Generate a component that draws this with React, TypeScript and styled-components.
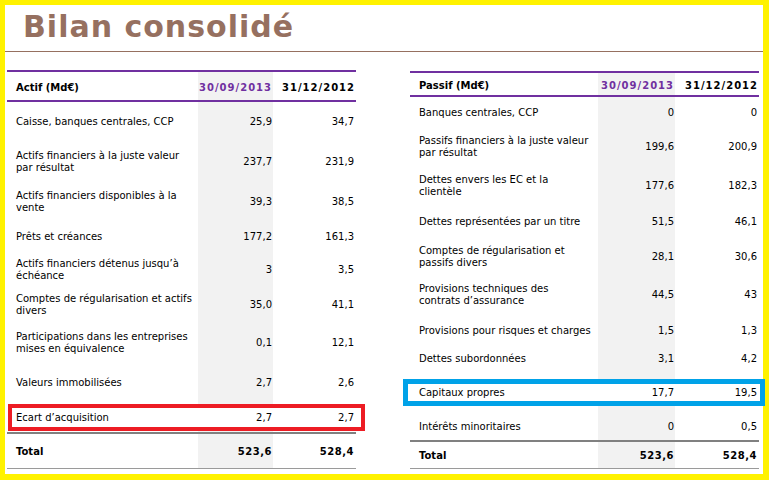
import styled, { createGlobalStyle } from "styled-components";

type Mark = { color: string; width: number; top: number; right: number; bottom: number; left: number };
type Line = { label: string; a: string; b: string; h: number; mark?: Mark };
type Sheet = {
  title: string;
  cols: [number, number, number];
  top: number;
  head: number;
  total: [string, string, number];
  rows: Line[];
};

const GlobalStyle = createGlobalStyle`
  body {
    margin: 0;
    background: #fff;
  }
`;

const actif: Sheet = {
  title: "Actif (Md€)",
  cols: [191, 75, 83],
  top: 0,
  head: 32,
  total: ["523,6", "528,4", 37],
  rows: [
    { label: "Caisse, banques centrales, CCP", a: "25,9", b: "34,7", h: 38 },
    { label: "Actifs financiers à la juste valeur\npar résultat", a: "237,7", b: "231,9", h: 42 },
    { label: "Actifs financiers disponibles à la\nvente", a: "39,3", b: "38,5", h: 37 },
    { label: "Prêts et créances", a: "177,2", b: "161,3", h: 33 },
    { label: "Actifs financiers détenus jusqu’à\néchéance", a: "3", b: "3,5", h: 33 },
    { label: "Comptes de régularisation et actifs\ndivers", a: "35,0", b: "41,1", h: 37 },
    { label: "Participations dans les entreprises\nmises en équivalence", a: "0,1", b: "12,1", h: 40 },
    { label: "Valeurs immobilisées", a: "2,7", b: "2,6", h: 39 },
    {
      label: "Ecart d’acquisition",
      a: "2,7",
      b: "2,7",
      h: 31,
      mark: { color: "#ed1c24", width: 4, top: 3, right: -9, bottom: 1, left: 1 },
    },
  ],
};

const passif: Sheet = {
  title: "Passif (Md€)",
  cols: [188, 77, 84],
  top: 1,
  head: 26,
  total: ["523,6", "528,4", 29],
  rows: [
    { label: "Banques centrales, CCP", a: "0", b: "0", h: 29 },
    { label: "Passifs financiers à la juste valeur\npar résultat", a: "199,6", b: "200,9", h: 40 },
    { label: "Dettes envers les EC et la\nclientèle", a: "177,6", b: "182,3", h: 38 },
    { label: "Dettes représentées par un titre", a: "51,5", b: "46,1", h: 34 },
    { label: "Comptes de régularisation et\npassifs divers", a: "28,1", b: "30,6", h: 35 },
    { label: "Provisions techniques des\ncontrats d’assurance", a: "44,5", b: "43", h: 42 },
    { label: "Provisions pour risques et charges", a: "1,5", b: "1,3", h: 29 },
    { label: "Dettes subordonnées", a: "3,1", b: "4,2", h: 28 },
    {
      label: "Capitaux propres",
      a: "17,7",
      b: "19,5",
      h: 40,
      mark: { color: "#00a2e8", width: 5, top: 7, right: -6, bottom: 6, left: -7 },
    },
    { label: "Intérêts minoritaires", a: "0", b: "0,5", h: 28 },
  ],
};

const App = () => {
  return (
    <>
      <GlobalStyle />
      <Frame>
        <Title>Bilan consolidé</Title>
        <Tables>
          {[actif, passif].map((sheet) => (
            <Table key={sheet.title} $cols={sheet.cols} $top={sheet.top}>
              <HeadRow $cols={sheet.cols} $h={sheet.head}>
                <HeadCell>{sheet.title}</HeadCell>
                <HeadCell $num $accent>30/09/2013</HeadCell>
                <HeadCell $num>31/12/2012</HeadCell>
              </HeadRow>
              {sheet.rows.map((row) => (
                <Row key={row.label} $cols={sheet.cols} $h={row.h}>
                  {row.mark && <Highlight $m={row.mark} />}
                  <Label>{row.label}</Label>
                  <Value>{row.a}</Value>
                  <Value $last>{row.b}</Value>
                </Row>
              ))}
              <TotalRow $cols={sheet.cols} $h={sheet.total[2]}>
                <Label $bold>Total</Label>
                <Value $bold>{sheet.total[0]}</Value>
                <Value $bold $last>{sheet.total[1]}</Value>
              </TotalRow>
            </Table>
          ))}
        </Tables>
      </Frame>
    </>
  );
};

export default App;

const Frame = styled.div`
  width: 769px;
  height: 480px;
  box-sizing: border-box;
  border: solid #fff200;
  border-width: 5px 6px 6px 5px;
  background: #fff;
  display: flex;
  flex-direction: column;
  font-family: "DejaVu Sans", Verdana, sans-serif;
  color: #000;
`;

const Title = styled.h1`
  margin: 0;
  height: 47px;
  box-sizing: border-box;
  padding: 4px 0 0 18px;
  border-bottom: 1px solid #967060;
  font-size: 30px;
  line-height: 36px;
  font-weight: bold;
  letter-spacing: 1px;
  color: #967060;
`;

const Tables = styled.div`
  display: flex;
  align-items: flex-start;
  gap: 54px;
  padding: 18px 0 0 2px;
`;

const Table = styled.div<{ $cols: [number, number, number]; $top: number }>`
  width: ${(p) => p.$cols[0] + p.$cols[1] + p.$cols[2]}px;
  margin-top: ${(p) => p.$top}px;
  display: flex;
  flex-direction: column;
  background: linear-gradient(
    90deg,
    transparent ${(p) => p.$cols[0]}px,
    #f2f2f2 ${(p) => p.$cols[0]}px,
    #f2f2f2 ${(p) => p.$cols[0] + p.$cols[1]}px,
    transparent ${(p) => p.$cols[0] + p.$cols[1]}px
  );
`;

const Row = styled.div<{ $cols: [number, number, number]; $h: number }>`
  position: relative;
  display: grid;
  grid-template-columns: ${(p) => p.$cols.map((c) => `${c}px`).join(" ")};
  align-items: center;
  height: ${(p) => p.$h}px;
  box-sizing: border-box;
`;

const HeadRow = styled(Row)`
  border-top: 2px solid #7030a0;
  border-bottom: 2px solid #7030a0;
`;

const TotalRow = styled(Row)`
  border-top: 2px solid #808080;
  border-bottom: 1px solid #9a9a9a;
`;

const HeadCell = styled.div<{ $num?: boolean; $accent?: boolean }>`
  font-size: 10px;
  font-weight: bold;
  letter-spacing: ${(p) => (p.$num ? "1px" : "0")};
  color: ${(p) => (p.$accent ? "#7030a0" : "#000")};
  text-align: ${(p) => (p.$num ? "right" : "left")};
  padding: ${(p) => (p.$num ? "2px 1px 0 0" : "2px 0 0 9px")};
`;

const Label = styled.div<{ $bold?: boolean }>`
  z-index: 1;
  padding: 2px 0 0 9px;
  font-size: 10px;
  line-height: 12px;
  font-weight: ${(p) => (p.$bold ? "bold" : "normal")};
  white-space: pre-line;
`;

const Value = styled.div<{ $bold?: boolean; $last?: boolean }>`
  z-index: 1;
  text-align: right;
  font-size: 10px;
  line-height: 12px;
  font-weight: ${(p) => (p.$bold ? "bold" : "normal")};
  letter-spacing: ${(p) => (p.$bold ? "0.5px" : "0")};
  padding: 2px ${(p) => (p.$last ? 2 : 1)}px 0 0;
`;

const Highlight = styled.div<{ $m: Mark }>`
  position: absolute;
  z-index: 0;
  top: ${(p) => p.$m.top}px;
  right: ${(p) => p.$m.right}px;
  bottom: ${(p) => p.$m.bottom}px;
  left: ${(p) => p.$m.left}px;
  border: ${(p) => p.$m.width}px solid ${(p) => p.$m.color};
  background: #fff;
`;
